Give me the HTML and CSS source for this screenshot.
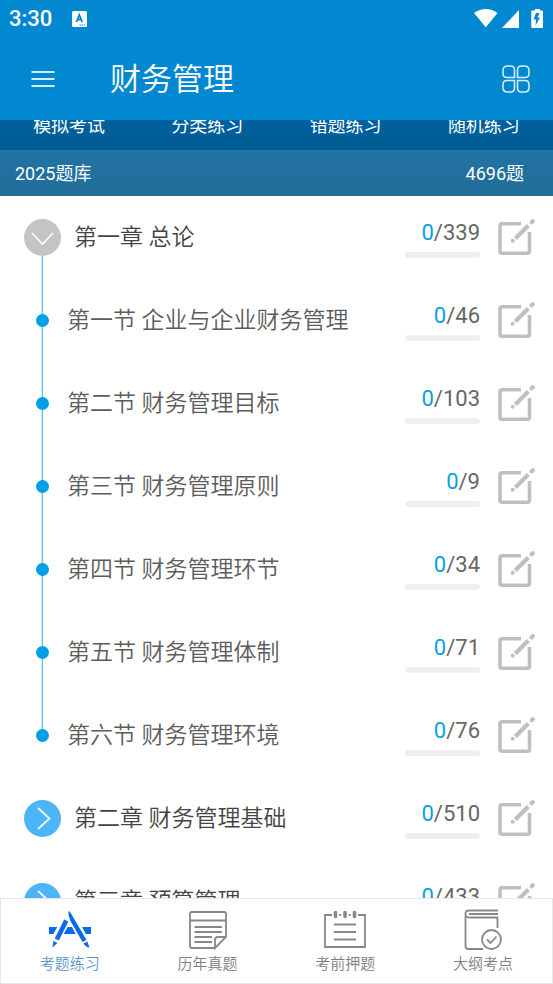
FILE: index.html
```
<!DOCTYPE html>
<html lang="zh-CN">
<head>
<meta charset="utf-8">
<meta name="viewport" content="width=device-width, initial-scale=1">
<title>财务管理</title>
<link rel="stylesheet" href="styles.css">
</head>
<body>
<svg class="sprite" aria-hidden="true">
  <symbol id="edit" viewBox="0 0 38 38">
    <path d="M24 4.800H5Q3 4.800 3 6.800V32.200Q3 34.200 5 34.200H30.500Q32.500 34.200 32.500 32.200V13" fill="none" stroke="#bfbfbf" stroke-width="3.600"/>
    <path d="M18.300 19.500L31.300 6.500" stroke="#bfbfbf" stroke-width="4.200"/>
    <path d="M34.700 3.300L35.700 2.300" stroke="#bfbfbf" stroke-width="4.200" stroke-linecap="round"/>
    <circle cx="15.700" cy="21.700" r="2" fill="#bfbfbf"/>
  </symbol>
  <symbol id="down" viewBox="0 0 37 37"><circle cx="18.500" cy="18.500" r="18.500" fill="#c4c4c4"/><path d="M8 14L18.500 25L29 14" fill="none" stroke="#fff" stroke-width="1.700"/></symbol>
  <symbol id="right" viewBox="0 0 37 37"><circle cx="18.500" cy="18.500" r="18.500" fill="#4bb5f7"/><path d="M14 8L25.500 18.500L14 29" fill="none" stroke="#fff" stroke-width="1.700"/></symbol>
</svg>
<header class="header">
  <div class="status">
    <span class="time">3:30</span>
    <svg class="notice" width="15" height="16" viewBox="0 0 15 16"><rect width="15" height="16" rx="1.500" fill="#fff"/><path d="M4.500 11L7.300 4L10.200 11M5.500 8.700H9" fill="none" stroke="#0288d1" stroke-width="1.800"/><path d="M7.500 14H13" stroke="#0288d1" stroke-width="1.200" stroke-dasharray="1.300 .8"/></svg>
    <svg class="signals" width="70" height="21" viewBox="0 0 70 21" fill="#fff">
      <path d="M0 4Q12 -4 23.500 4L11.800 18.300Z"/><path d="M45 1V19H28Z"/>
      <path fill-rule="evenodd" d="M61 -.5H66V1.500H68Q69 1.500 69 2.500V18Q69 19 68 19H58Q57.300 19 57.300 18V2.500Q57.300 1.500 58 1.500H61ZM62 4L59.500 10.500H62L61.500 16.500L66 8.500H63.500L65.500 4Z"/>
    </svg>
  </div>
  <div class="bar">
    <button class="icon-button" aria-label="菜单"><svg width="24" height="18" viewBox="0 0 24 18"><path d="M0.500 2H23.500M0.500 9H23.500M0.500 16H23.500" stroke="#d9edf8" stroke-width="2"/></svg></button>
    <h1>财务管理</h1>
    <button class="icon-button" aria-label="更多"><svg width="28" height="28" viewBox="0 0 28 28" fill="none" stroke="#d9edf8" stroke-width="1.600"><path d="M5.500 1H8.500Q12.500 1 12.500 5V12.500H5Q1 12.500 1 8.500V5.500Q1 1 5.500 1Z"/><path d="M19.500 1H22.500Q27 1 27 5.500V8.500Q27 12.500 23 12.500H15.500V5Q15.500 1 19.500 1Z"/><path d="M5 15.500H12.500V23Q12.500 27 8.500 27H5.500Q1 27 1 22.500V19.500Q1 15.500 5 15.500Z"/><path d="M15.500 15.500H23Q27 15.500 27 19.500V22.500Q27 27 22.500 27H19.500Q15.500 27 15.500 23Z"/></svg></button>
  </div>
</header>
<nav class="modes"><a href="#exam">模拟考试</a><a href="#type">分类练习</a><a href="#wrong">错题练习</a><a href="#random">随机练习</a></nav>
<div class="bank"><span>2025题库</span><span>4696题</span></div>
<main class="list">
  <div class="row chapter open"><button class="toggle" aria-label="收起"><svg><use href="#down"/></svg></button><h2>第一章 总论</h2><div class="progress"><p><b>0</b>/339</p><i></i></div><button class="edit" aria-label="练习"><svg><use href="#edit"/></svg></button></div>
  <div class="row section"><span class="dot"></span><h3>第一节 企业与企业财务管理</h3><div class="progress"><p><b>0</b>/46</p><i></i></div><button class="edit" aria-label="练习"><svg><use href="#edit"/></svg></button></div>
  <div class="row section"><span class="dot"></span><h3>第二节 财务管理目标</h3><div class="progress"><p><b>0</b>/103</p><i></i></div><button class="edit" aria-label="练习"><svg><use href="#edit"/></svg></button></div>
  <div class="row section"><span class="dot"></span><h3>第三节 财务管理原则</h3><div class="progress"><p><b>0</b>/9</p><i></i></div><button class="edit" aria-label="练习"><svg><use href="#edit"/></svg></button></div>
  <div class="row section"><span class="dot"></span><h3>第四节 财务管理环节</h3><div class="progress"><p><b>0</b>/34</p><i></i></div><button class="edit" aria-label="练习"><svg><use href="#edit"/></svg></button></div>
  <div class="row section"><span class="dot"></span><h3>第五节 财务管理体制</h3><div class="progress"><p><b>0</b>/71</p><i></i></div><button class="edit" aria-label="练习"><svg><use href="#edit"/></svg></button></div>
  <div class="row section last"><span class="dot"></span><h3>第六节 财务管理环境</h3><div class="progress"><p><b>0</b>/76</p><i></i></div><button class="edit" aria-label="练习"><svg><use href="#edit"/></svg></button></div>
  <div class="row chapter"><button class="toggle" aria-label="展开"><svg><use href="#right"/></svg></button><h2>第二章 财务管理基础</h2><div class="progress"><p><b>0</b>/510</p><i></i></div><button class="edit" aria-label="练习"><svg><use href="#edit"/></svg></button></div>
  <div class="row chapter"><button class="toggle" aria-label="展开"><svg><use href="#right"/></svg></button><h2>第三章 预算管理</h2><div class="progress"><p><b>0</b>/433</p><i></i></div><button class="edit" aria-label="练习"><svg><use href="#edit"/></svg></button></div>
</main>
<nav class="tabs">
  <a class="active" href="#practice"><svg width="44" height="42" viewBox="0 0 44 42" fill="#0b6be6">
    <path d="M1 18H43V25H1Z"/>
    <path d="M19 10L6 33M20.500 2L37 33" stroke="#fff" stroke-width="9"/>
    <path d="M17.500 25L21.300 18L25.500 25Z"/>
    <path d="M18.300 11.500L8.800 30.500" stroke="#0b6be6" stroke-width="4.600"/><path d="M5.500 32L9.500 34L4.300 38.500Z"/>
    <path d="M20.500 2Q22 2.500 24.500 7L38.500 31L34.500 33L22.500 12Q20 6 20.500 2Z"/><path d="M35.500 34.500L39.300 32.500L41.500 38.500Q38 38.500 35.500 34.500Z"/>
  </svg><span>考题练习</span></a>
  <a href="#past"><svg width="44" height="42" viewBox="0 0 44 42" fill="none" stroke="#888" stroke-width="1.800"><path d="M29 39H6Q4 39 4 37V5Q4 3 6 3H38Q40 3 40 5V28L29 39V31Q29 28 32 28H40M4 11.500H40M8.500 18H36M8.500 23H36M8.500 28H26M8.500 33H26"/></svg><span>历年真题</span></a>
  <a href="#predict"><svg width="44" height="42" viewBox="0 0 44 42" fill="none" stroke="#888" stroke-width="1.800"><path d="M9 6H2V38H42V6H35M11 15.500H33M11 23H33M11 30.500H33"/><path d="M12.500 3.500V7.500M22 3.500V7.500M31.500 3.500V7.500" stroke-width="3.600" stroke-linecap="round"/><path d="M17.200 5V7M26.700 5V7" stroke-width="2"/></svg><span>考前押题</span></a>
  <a href="#outline"><svg width="44" height="42" viewBox="0 0 44 42" fill="none" stroke="#888" stroke-width="1.800"><path d="M37 1.500H8Q4.500 1.500 4.500 5T8 8.500H36.500V19M37 5H8M4.500 5V37Q4.500 40 7.500 40H22"/><circle cx="30.500" cy="30.500" r="9.500"/><path d="M26 30.500L29.500 34L35.500 27.500"/></svg><span>大纲考点</span></a>
</nav>
</body>
</html>
```

FILE: styles.css
```
* { box-sizing: border-box; }
body {
  margin: 0;
  height: 100vh;
  display: flex;
  flex-direction: column;
  overflow: hidden;
  background: #fff;
  color: #444;
  font-family: Roboto, "Noto Sans CJK SC", sans-serif;
}
h1, h2, h3, p { margin: 0; font-weight: 350; }
button { padding: 0; border: 0; background: none; cursor: pointer; }
a { color: inherit; text-decoration: none; }
svg { display: block; }
.sprite { position: absolute; width: 0; height: 0; }

.header { flex: none; background: #0288d1; color: #fff; }
.status { display: flex; align-items: center; height: 38px; padding: 0 9px; }
.time { font-size: 22px; line-height: 38px; font-weight: 500; }
.notice { margin-left: 20px; }
.signals { margin-left: auto; }
.bar { display: flex; align-items: center; height: 82px; padding: 0 16px; }
.icon-button { display: grid; place-items: center; width: 54px; height: 54px; }
.icon-button:last-child { width: 42px; }
h1 { flex: 1; padding: 2px 0 0 40px; font-size: 31px; line-height: 46px; }

.modes {
  flex: none;
  display: flex;
  align-items: flex-end;
  height: 30px;
  padding-bottom: 10px;
  overflow: hidden;
  background: linear-gradient(#0061a0, #005b91);
  color: #fff;
  font-size: 18px;
  line-height: 28px;
}
.modes a { flex: 1; text-align: center; }
.bank {
  flex: none;
  display: flex;
  justify-content: space-between;
  padding: 2px 29px 0 15px;
  background: linear-gradient(#2173a5, #216d98);
  color: #fff;
  font-size: 18px;
  line-height: 44px;
}

.list { flex: 1; min-height: 0; overflow: hidden; }
.row { position: relative; display: flex; align-items: center; height: 83px; padding: 0 18px 0 24px; }
.toggle, .toggle svg { width: 37px; height: 37px; }
.toggle { position: relative; z-index: 1; }
h2, h3 { flex: 1; padding-top: 1px; font-size: 23px; line-height: 34px; }
h2 { padding-left: 13px; }
h3 { padding-left: 18px; color: #5c5c5c; }
.dot { position: relative; z-index: 1; width: 13px; height: 13px; margin-left: 12px; border-radius: 50%; background: #009fe8; }
.open::before, .section::before {
  content: "";
  position: absolute;
  left: 42px;
  top: 0;
  bottom: 0;
  width: 1px;
  background: #5cc0f0;
  box-shadow: -1px 0 #c5e9fa;
}
.open::before { top: 50%; }
.last::before { bottom: 50%; }
.progress { width: 75px; margin-right: 17px; }
.progress p { padding-top: 1px; color: #666; font-size: 22px; line-height: 30px; font-weight: 400; text-align: right; }
.progress b { color: #0aa0e4; font-weight: inherit; }
.progress i { display: block; height: 6px; margin-top: 4px; border-radius: 3px; background: #efefef; }
.edit, .edit svg { width: 38px; height: 38px; }

.tabs { flex: none; display: flex; height: 86px; border: 1px solid #e8e8e8; background: #fff; }
.tabs a { flex: 1; display: flex; flex-direction: column; align-items: center; padding-top: 10px; color: #808080; font-size: 15px; line-height: 26px; font-weight: 350; }
.tabs .active { color: #5b96d2; }
```
